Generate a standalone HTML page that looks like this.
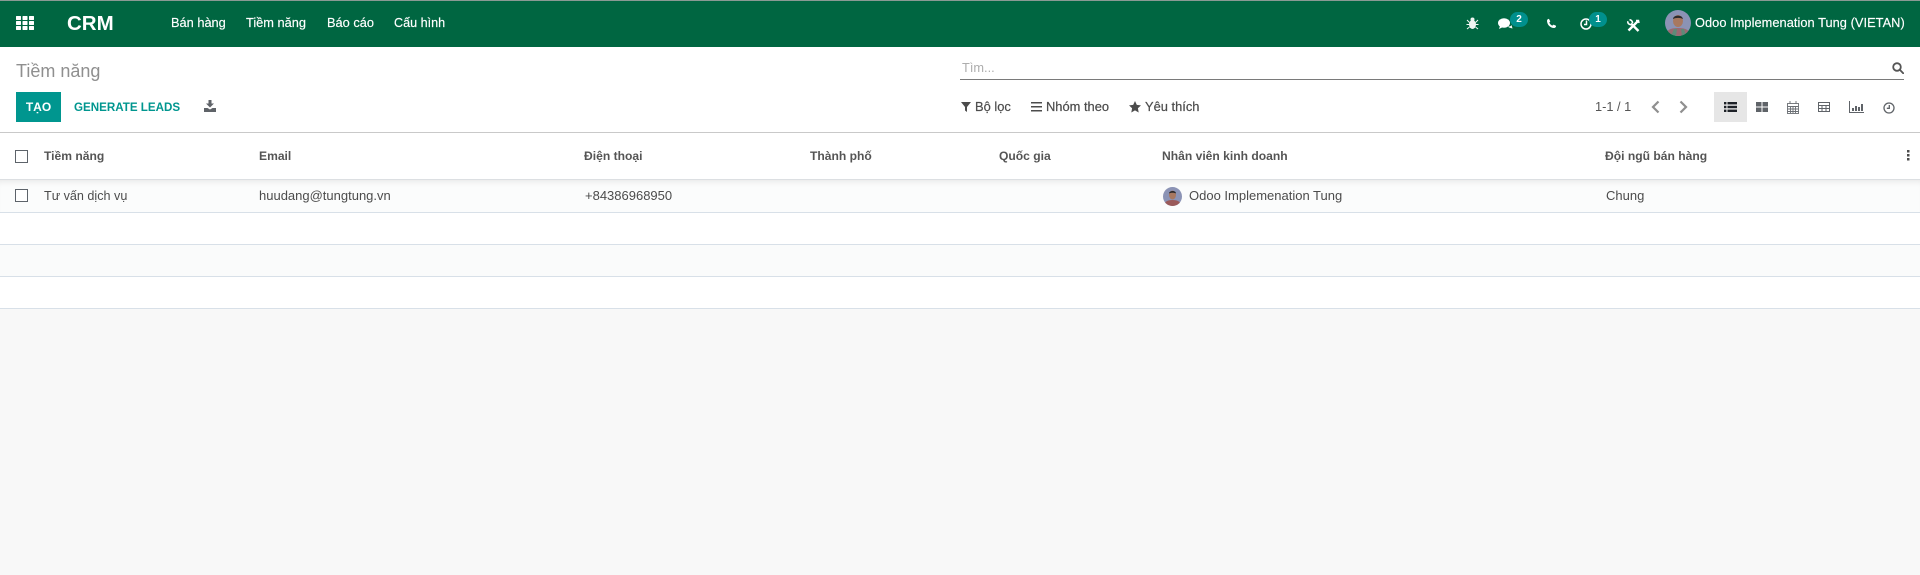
<!DOCTYPE html>
<html lang="vi"><head><meta charset="utf-8"><title>Tiềm năng</title>
<style>
html,body{margin:0;padding:0;width:1920px;height:575px;overflow:hidden;background:#f8f8f8;font-family:"Liberation Sans","Noto Sans CJK SC",sans-serif;font-size:13px;color:#4c4c4c}
.a{position:absolute;white-space:nowrap;line-height:16px}
svg{position:absolute;display:block}
.n{color:#fff;top:15px;font-size:12.8px;-webkit-text-stroke:.15px #fff}
.h{font-weight:bold;color:#555;top:148px;font-size:12.1px}
.c{top:188px;color:#4c4c4c;font-size:13px}
.f{top:99px;color:#4c4c4c;font-size:12.9px;-webkit-text-stroke:.2px #4c4c4c}
.cb{position:absolute;left:15px;width:11px;height:11px;border:1.5px solid #5d636a;background:#fff}
.l{position:absolute;left:0;width:1920px}
.b{position:absolute;border-radius:8px;background:#00908d;color:#fff;font-size:10px;font-weight:bold;text-align:center;line-height:15px;height:15px;width:18px}
</style></head><body>
<div class="l" style="top:0;height:47px;background:#006641;border-top:1px solid #8a9a94;box-sizing:border-box"></div>
<div class="l" style="top:47px;height:85px;background:#fff"></div>
<div class="l" style="top:132px;height:47px;background:#fff;border-top:1px solid #c9c9c9;box-sizing:border-box"></div>
<div class="l" style="top:179px;height:34px;background:#fbfcfc;border-top:1px solid #dcdfe2;border-bottom:1px solid #d8e0e8;box-sizing:border-box;box-shadow:inset 0 6px 6px -4px #e9e9e9"></div>
<div class="l" style="top:213px;height:32px;background:#fff;border-bottom:1px solid #d8e0e8;box-sizing:border-box"></div>
<div class="l" style="top:245px;height:32px;background:#fafbfb;border-bottom:1px solid #d8e0e8;box-sizing:border-box"></div>
<div class="l" style="top:277px;height:32px;background:#fff;border-bottom:1px solid #d8e0e8;box-sizing:border-box"></div>

<svg style="left:16px;top:16px" width="18" height="14" fill="#fff"><rect x="0" y="0" width="5" height="4" rx=".6"/><rect x="6.500" y="0" width="5" height="4" rx=".6"/><rect x="13" y="0" width="5" height="4" rx=".6"/><rect x="0" y="5" width="5" height="4" rx=".6"/><rect x="6.500" y="5" width="5" height="4" rx=".6"/><rect x="13" y="5" width="5" height="4" rx=".6"/><rect x="0" y="10" width="5" height="4" rx=".6"/><rect x="6.500" y="10" width="5" height="4" rx=".6"/><rect x="13" y="10" width="5" height="4" rx=".6"/></svg>
<div class="a" style="left:67px;top:14px;color:#fff;font-size:20.500px;font-weight:bold;line-height:20px">CRM</div>
<div class="a n" style="left:171px">Bán hàng</div>
<div class="a n" style="left:246px">Tiềm năng</div>
<div class="a n" style="left:327px">Báo cáo</div>
<div class="a n" style="left:394px;font-size:12.600px">Cấu hình</div>

<svg style="left:1466px;top:17px" width="13" height="13" fill="#f1f6f3" stroke="#f1f6f3"><ellipse cx="6.500" cy="7.500" rx="3.500" ry="4.500" stroke="none"/><circle cx="6.500" cy="2.500" r="2" stroke="none"/><path d="M1 3l2.500 2.500M12 3L9.500 5.500M.5 7.500h3M12.500 7.500h-3M1 12l2.500-2M12 12L9.500 10" stroke-width="1" fill="none"/></svg>
<svg style="left:1498px;top:18px" width="15" height="12" fill="#fff"><ellipse cx="6" cy="5" rx="6" ry="4.700"/><path d="M2 8l-1 3 4-2zM10 8.500c2 .2 3-.5 3.500-1.500l1 3.500-3.500-1z"/></svg>
<div class="b" style="left:1510px;top:12px">2</div>
<svg style="left:1546px;top:18px" width="11" height="11"><path d="M1 2.500C1.500 1 2.500.8 3 1l1.300 2.400-1 1.200c.5 1.300 1.600 2.400 3 3l1.200-1L10 7.800c.2.700-.1 1.800-1.500 2.200C4.500 10.300.8 6.500 1 2.500z" fill="#fff"/></svg>
<svg style="left:1580px;top:18px" width="12" height="12" fill="none" stroke="#fff" stroke-width="1.500"><circle cx="6" cy="6" r="5"/><path d="M6.500 2.500v4h-2.500"/></svg>
<div class="b" style="left:1589px;top:12px">1</div>
<svg style="left:1627px;top:19px" width="13" height="13" fill="none" stroke="#fff"><path d="M1.500 11.500L11 2" stroke-width="2.400"/><path d="M9 1.500l2.500 0 0.500 2.500" stroke-width="1.500"/><path d="M4 4.500L11.500 12" stroke-width="2.400"/><path d="M.8 2.200a3 3 0 0 0 4.800 2.800M2.500.8a3 3 0 0 1 3 3.200" stroke-width="1.600"/></svg>
<svg style="left:1665px;top:10px" width="26" height="26"><defs><clipPath id="p"><circle cx="13" cy="13" r="13"/></clipPath></defs><g clip-path="url(#p)"><rect width="26" height="26" fill="#8b93b5"/><path d="M1 26c0-6 4-8 12-8s12 2 12 8z" fill="#9a6a72"/><path d="M6 26l3-7h3l-1 7zM16 19h3l2 7h-4z" fill="#5f8a78"/><ellipse cx="13" cy="11" rx="5" ry="6" fill="#a87860"/><path d="M8 9c0-4 9-5 10 0-3-1.500-7-1.500-10 0z" fill="#2c2a2c"/></g></svg>
<div class="a n" style="left:1695px;letter-spacing:.05px">Odoo Implemenation Tung (VIETAN)</div>

<div class="a" style="left:16px;top:59px;font-size:18px;line-height:24px;color:#8f8f8f">Tiềm năng</div>
<div class="a" style="left:16px;top:92px;width:45px;height:30px;background:#00968f;color:#fff;font-weight:bold;font-size:12px;line-height:30px;text-align:center">TẠO</div>
<div class="a" style="left:74px;top:100px;color:#00968f;font-weight:bold;font-size:11.600px">GENERATE LEADS</div>
<svg style="left:204px;top:100px" width="12" height="12" fill="#5f6368"><path d="M4.500 0h3v3.500H10L6 7.500 2 3.500h2.500z"/><path d="M0 8h3.500l2.500 1.500L8.500 8H12v4H0z"/></svg>

<div class="a" style="left:962px;top:60px;color:#adadad;font-size:12.800px">Tìm...</div>
<div class="l" style="left:960px;top:79px;width:944px;height:1px;background:#7a7a7a"></div>
<svg style="left:1892px;top:62px" width="12" height="12" fill="none" stroke="#555" stroke-width="1.800"><circle cx="5" cy="5" r="3.800"/><path d="M7.800 7.800l3.400 3.400" stroke-linecap="round"/></svg>

<svg style="left:961px;top:102px" width="10" height="10" fill="#4c4c4c"><path d="M0 0h10L6 5v5L4 8.500V5z"/></svg>
<div class="a f" style="left:975px">Bộ lọc</div>
<svg style="left:1031px;top:102px" width="11" height="10" fill="#4c4c4c"><rect width="11" height="1.500"/><rect y="4" width="11" height="1.500"/><rect y="8" width="11" height="1.500"/></svg>
<div class="a f" style="left:1046px">Nhóm theo</div>
<svg style="left:1129px;top:101px" width="12" height="12" fill="#4c4c4c"><path d="M6 0l1.800 3.900 4.200.5-3.100 2.900.8 4.200L6 9.400l-3.700 2.100.8-4.200L0 4.400l4.200-.5z"/></svg>
<div class="a f" style="left:1145px">Yêu thích</div>

<div class="a" style="left:1595px;top:99px;font-size:12.800px;color:#555">1-1 / 1</div>
<svg style="left:1651px;top:100px" width="9" height="14" fill="none" stroke="#8f8f8f" stroke-width="2.200"><path d="M7.500 1.500L2 7l5.500 5.500"/></svg>
<svg style="left:1679px;top:100px" width="9" height="14" fill="none" stroke="#8f8f8f" stroke-width="2.200"><path d="M1.500 1.500L7 7l-5.500 5.500"/></svg>
<div class="l" style="left:1714px;top:92px;width:33px;height:30px;background:#e6e6e6"></div>
<svg style="left:1724px;top:102px" width="13" height="10" fill="#1d2127"><rect width="2.400" height="2.400"/><rect x="3.500" width="9.500" height="2.400"/><rect y="3.800" width="2.400" height="2.400"/><rect x="3.500" y="3.800" width="9.500" height="2.400"/><rect y="7.600" width="2.400" height="2.400"/><rect x="3.500" y="7.600" width="9.500" height="2.400"/></svg>
<svg style="left:1756px;top:102px" width="12" height="10" fill="#5f6368"><rect width="5.500" height="4.500"/><rect x="6.500" width="5.500" height="4.500"/><rect y="5.500" width="5.500" height="4.500"/><rect x="6.500" y="5.500" width="5.500" height="4.500"/></svg>
<svg style="left:1787px;top:101px" width="12" height="13" fill="none" stroke="#6a6e73" stroke-width=".9"><rect x=".5" y="2.500" width="11" height="10"/><path d="M.5 5.500h11M.5 8h11M.5 10.500h11M3.500 5v7M6 5v7M8.500 5v7M3 0v3M9 0v3"/></svg>
<svg style="left:1818px;top:102px" width="12" height="10" fill="none" stroke="#5f6368"><rect x=".5" y=".5" width="11" height="9"/><path d="M.5 3.500h11M.5 6.500h11M4 3.500v6M8 3.500v6"/></svg>
<svg style="left:1849px;top:101px" width="15" height="12" fill="#5f6368"><path d="M0 0h1v11h15v1H0z"/><rect x="3" y="7" width="2" height="3"/><rect x="6" y="5" width="2" height="5"/><rect x="9" y="6" width="2" height="4"/><rect x="12" y="3" width="2" height="7"/></svg>
<svg style="left:1883px;top:102px" width="12" height="12" fill="none" stroke="#5f6368" stroke-width="1.300"><circle cx="6" cy="6" r="5"/><path d="M6.300 3v3.300H3.800"/></svg>

<div class="cb" style="top:150px"></div>
<div class="a h" style="left:44px">Tiềm năng</div>
<div class="a h" style="left:259px">Email</div>
<div class="a h" style="left:584px">Điện thoại</div>
<div class="a h" style="left:810px">Thành phố</div>
<div class="a h" style="left:999px">Quốc gia</div>
<div class="a h" style="left:1162px">Nhân viên kinh doanh</div>
<div class="a h" style="left:1605px">Đội ngũ bán hàng</div>
<svg style="left:1907px;top:150px" width="3" height="11" fill="#4c4c4c"><rect width="2.500" height="2.500"/><rect y="4" width="2.500" height="2.500"/><rect y="8" width="2.500" height="2.500"/></svg>

<div class="cb" style="top:189px"></div>
<div class="a c" style="left:44px;font-size:12.600px">Tư vấn dịch vụ</div>
<div class="a c" style="left:259px">huudang@tungtung.vn</div>
<div class="a c" style="left:585px">+84386968950</div>
<svg style="left:1163px;top:187px" width="19" height="19"><defs><clipPath id="q"><circle cx="9.500" cy="9.500" r="9.500"/></clipPath></defs><g clip-path="url(#q)"><rect width="19" height="19" fill="#8b93b5"/><path d="M1 19c0-4 3-6 8.500-6s8.500 2 8.500 6z" fill="#9a5a5a"/><ellipse cx="9.500" cy="8" rx="3.500" ry="4.500" fill="#a87860"/><path d="M6 6.500c0-3 7-3.500 7 0-2-1-5-1-7 0z" fill="#2c2a2c"/></g></svg>
<div class="a c" style="left:1189px">Odoo Implemenation Tung</div>
<div class="a c" style="left:1606px">Chung</div>
</body></html>
